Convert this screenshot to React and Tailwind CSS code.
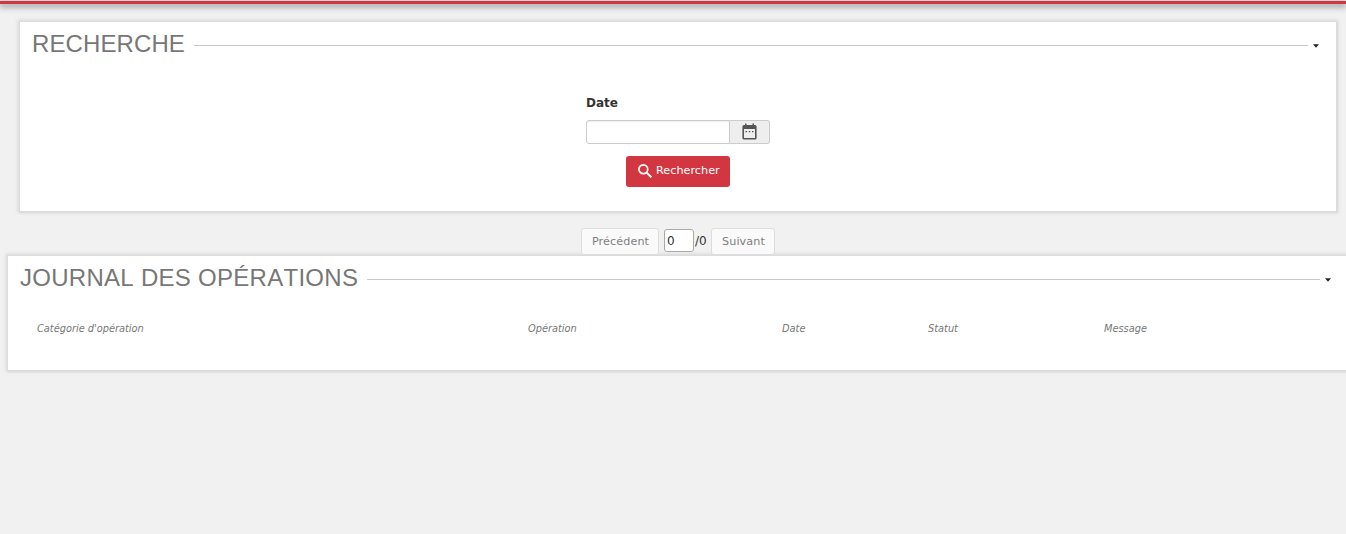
import React from "react";

function Panel({ title, titleClass, className, children }) {
  return (
    <section
      className={
        "bg-white shadow-[0_0_0_1px_#dcdcdc,1px_1px_0_1px_#dcdcdc,0_0_2px_2px_#dedede,0_0_4px_2px_#e2e2e2] " +
        className
      }
    >
      <header className="flex h-11 items-start pl-3 pr-[17px]">
        <h2
          className={
            "whitespace-nowrap pt-[4px] font-['Liberation_Sans',Arial,sans-serif] text-2xl leading-9 text-[#777] [font-kerning:none] " +
            titleClass
          }
        >
          {title}
        </h2>
        <div className="ml-[9px] mr-[5px] mt-[23px] h-px flex-1 bg-[#c8c8c8]" />
        <svg className="mt-[22px] h-[4px] w-[6px]" viewBox="0 0 6 4">
          <path d="M0 0.3h6L3 3.8z" fill="#222" />
        </svg>
      </header>
      {children}
    </section>
  );
}

function CalendarIcon() {
  return (
    <svg className="h-[17px] w-[15px]" viewBox="0 0 15 17">
      <path
        d="M2 2h1V.5h1.500V2h6V.5H12V2h1a1.600 1.600 0 0 1 1.600 1.600v11.300A1.600 1.600 0 0 1 13 16.500H2A1.600 1.600 0 0 1 .4 14.900V3.600A1.600 1.600 0 0 1 2 2zM2 6v9h11V6z"
        fill="#555"
        fillRule="evenodd"
      />
      <path d="M3.500 8h1.500v1.200H3.500zM6.750 8h1.500v1.200h-1.500zM10 8h1.500v1.200H10z" fill="#555" />
    </svg>
  );
}

function SearchIcon() {
  return (
    <svg className="h-[14px] w-[14px]" viewBox="0 0 14 14" fill="none" stroke="#fff">
      <circle cx="5.300" cy="5.300" r="4.400" strokeWidth="1.700" />
      <path d="M8.600 8.600l4.800 4.800" strokeWidth="2" />
    </svg>
  );
}

function PagerButton({ children, className }) {
  return (
    <button
      className={
        "h-[27px] rounded-[3px] border border-[#ddd] bg-[#fafafa] pt-px text-[11.2px] leading-4 tracking-[0.1px] text-[#808080] " +
        className
      }
    >
      {children}
    </button>
  );
}

export default function App() {
  return (
    <div className="h-[534px] w-full overflow-hidden bg-[#f1f1f1] pt-px font-['DejaVu_Sans',sans-serif] text-xs text-[#333]">
      <div className="h-[3px] bg-[#d23641] shadow-[0_2px_6px_1px_#999]" />

      <Panel
        title="RECHERCHE"
        titleClass="tracking-[0.1px]"
        className="ml-5 mt-[18px] h-[189px] w-[1316px]"
      >
        <form className="ml-[566px] flex w-[184px] flex-col" onSubmit={(e) => e.preventDefault()}>
          <label className="mt-[29px] h-4 text-xs font-bold leading-4">Date</label>
          <div className="mt-[9px] flex h-6">
            <input className="w-[144px] rounded-l-[3px] border border-[#ccc] bg-white px-1 shadow-[inset_0_1px_1px_#eee] outline-none" />
            <button
              type="button"
              className="flex w-10 items-start justify-center rounded-r-[3px] border border-l-0 border-[#ccc] bg-[#eee] pt-[2px]"
            >
              <CalendarIcon />
            </button>
          </div>
          <button className="mt-3 flex h-[31px] w-[104px] items-start self-center rounded-[3px] bg-[#d23641] pl-3 text-[11.2px] tracking-[0.04px] text-white">
            <span className="pt-2">
              <SearchIcon />
            </span>
            <span className="ml-1 pt-[7px] leading-4">Rechercher</span>
          </button>
        </form>
      </Panel>

      <nav className="relative z-10 ml-[581px] mt-[17px] flex h-[27px] w-[194px]">
        <PagerButton className="w-[78px] pl-[2px] pr-px">Précédent</PagerButton>
        <input
          defaultValue="0"
          className="ml-[5px] mt-px h-[23px] w-[30px] rounded-[3px] border border-[#aaa] bg-white px-[2px] text-xs outline-none"
        />
        <span className="ml-px w-[16px] pt-[5px] leading-4">/0</span>
        <PagerButton className="w-16 pl-[2px] pr-px">Suivant</PagerButton>
      </nav>

      <Panel
        title="JOURNAL DES OPÉRATIONS"
        titleClass="tracking-[0.28px]"
        className="ml-2 mt-px h-[114px] w-[1340px]"
      >
        <div className="grid grid-cols-[491px_254px_146px_176px_1fr] pl-[29px] pt-[21px] font-['DejaVu_Sans_Condensed','DejaVu_Sans',sans-serif] text-[10.9px] italic leading-4 text-[#777]">
          <span>Catégorie d'opération</span>
          <span>Opération</span>
          <span>Date</span>
          <span>Statut</span>
          <span>Message</span>
        </div>
      </Panel>
    </div>
  );
}
